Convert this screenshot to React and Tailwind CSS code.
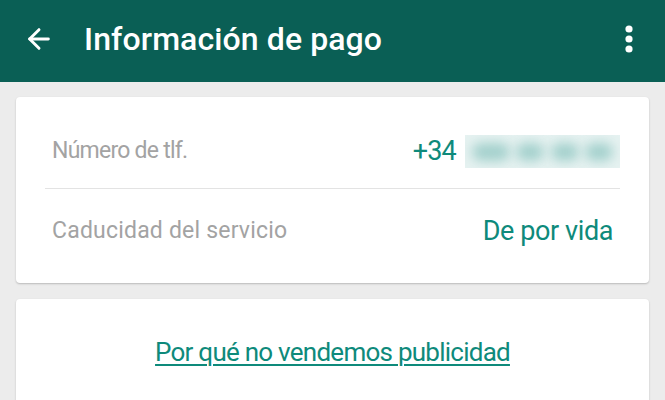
import { ArrowLeft } from "lucide-react";

const Kebab = () => (
  <svg width="12" height="30" viewBox="0 0 12 30" fill="white">
    <circle cx="6" cy="5" r="3.6" />
    <circle cx="6" cy="15" r="3.6" />
    <circle cx="6" cy="25" r="3.6" />
  </svg>
);

const App = () => {
  return (
    <div
      className="w-[665px] h-[400px] overflow-hidden bg-[#ececec]"
      style={{ fontFamily: "Roboto, 'Liberation Sans', sans-serif" }}
    >
      <header className="h-[82px] bg-[#0a5f55] flex items-center pl-[23px] pr-[30px] pb-[4px] text-white">
        <ArrowLeft size={32} strokeWidth={2.2} />
        <h1 className="ml-[29px] text-[32px] font-medium tracking-[0.1px]">Información de pago</h1>
        <div className="ml-auto">
          <Kebab />
        </div>
      </header>

      <div className="px-[16px] pt-[15px] flex flex-col gap-[16px]">
        {/* datos del pago */}
        <section className="bg-white rounded-[4px] shadow-[0_1px_2px_rgba(0,0,0,0.22)] px-[29px] h-[186px]">
          <div className="flex items-center justify-between h-[92px] pt-[18px] border-b border-[#e3e3e3]">
            <span className="pl-[7px] text-[23px] text-[#a3a3a3] tracking-[-0.75px]">Número de tlf.</span>
            <div className="flex items-center gap-[9px] text-[#0e8a7b]">
              <span className="text-[27px] tracking-[-0.8px]">+34</span>
              <div className="w-[155px] h-[33px] bg-[#e6f2f1] flex items-center justify-around px-[4px] overflow-hidden">
                <span className="w-[38px] h-[18px] rounded-full bg-[#a3d0cc] blur-[6px]" />
                <span className="w-[28px] h-[18px] rounded-full bg-[#a3d0cc] blur-[6px]" />
                <span className="w-[28px] h-[18px] rounded-full bg-[#a3d0cc] blur-[6px]" />
                <span className="w-[28px] h-[18px] rounded-full bg-[#a3d0cc] blur-[6px]" />
              </div>
            </div>
          </div>
          <div className="flex items-center justify-between h-[84px]">
            <span className="pl-[7px] text-[23px] text-[#a3a3a3] tracking-[0.2px]">Caducidad del servicio</span>
            <span className="text-[27px] text-[#0e8a7b] mr-[7px] tracking-[-0.4px]">De por vida</span>
          </div>
        </section>

        <section className="bg-white rounded-[4px] shadow-[0_1px_2px_rgba(0,0,0,0.22)] h-[120px] flex justify-center pt-[34px]">
          <a
            href="#"
            className="h-fit text-[26px] text-[#0e8a7b] underline underline-offset-[3px] decoration-[1.5px] tracking-[-0.75px]"
          >
            Por qué no vendemos publicidad
          </a>
        </section>
      </div>
    </div>
  );
};

export default App;
